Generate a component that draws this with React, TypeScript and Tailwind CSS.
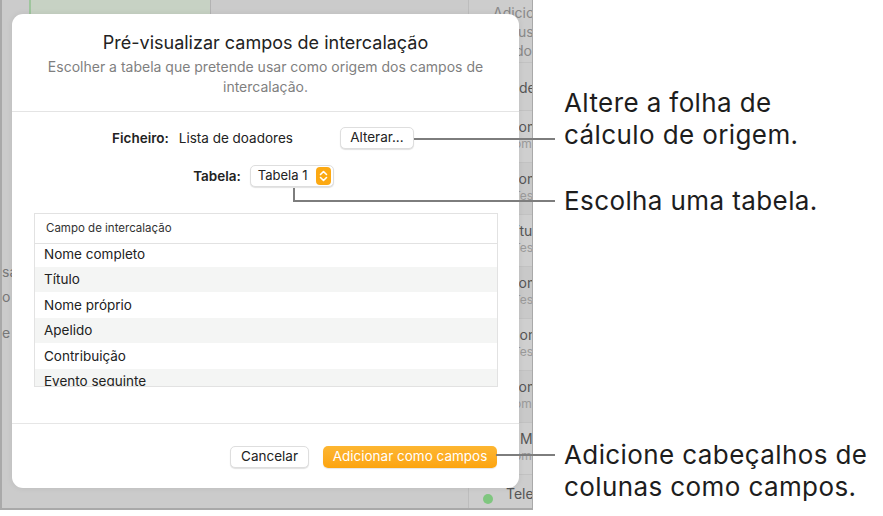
import React from "react";

const stripRows = [
  { a: "Nome", b: "Nome", pa: 508, pb: 505 },
  { a: "Nome", b: "Teste", pa: 508, pb: 513 },
  { a: "Título", b: "Teste", pa: 507, pb: 513 },
  { a: "Nome", b: "Teste", pa: 508, pb: 513 },
  { a: "Nome", b: "Teste", pa: 509, pb: 513 },
  { a: "Nome", b: "Nome", pa: 508, pb: 505 },
  { a: "Mail", b: "Nome", pa: 520, pb: 505 },
];

const fields = [
  "Nome completo",
  "Título",
  "Nome próprio",
  "Apelido",
  "Contribuição",
  "Evento seguinte",
];

function Stepper() {
  return (
    <svg width="15" height="18" viewBox="0 0 15 18" className="block shrink-0">
      <rect x="0" y="0" width="15" height="18" rx="4" fill="#fca913" />
      <path d="M4.5 7.5 L7.5 4.5 L10.5 7.5" fill="none" stroke="white" strokeWidth="1.6" strokeLinecap="round" strokeLinejoin="round" />
      <path d="M4.5 10.5 L7.5 13.5 L10.5 10.5" fill="none" stroke="white" strokeWidth="1.6" strokeLinecap="round" strokeLinejoin="round" />
    </svg>
  );
}

export default function App() {
  return (
    <div
      className="relative w-[883px] h-[516px] bg-white overflow-hidden flex items-start"
      style={{ fontFamily: "Inter, 'Noto Sans', sans-serif" }}
    >
      {/* background app screenshot */}
      <div className="relative w-[533px] h-[510px] shrink-0 bg-[#cbcbcb] border-l-2 border-r border-b-2 border-[#a9a9a9] overflow-hidden flex">
        <div className="relative flex-1 flex flex-col">
          <div className="h-[14px] flex">
            <div className="w-[27px]" />
            <div className="w-[182px] bg-[#c7d2c4] border-l-2 border-[#9ec59d] border-r border-r-[#b3b3b3]" />
          </div>
          <div className="mt-[248px] flex flex-col text-[14px] leading-[20px] text-[#777]">
            <div className="h-[25px]">sa</div>
            <div className="h-[36px]">o</div>
            <div>e l</div>
          </div>
        </div>
        <div className="w-[64px] shrink-0 border-l border-[#bdbdbd] bg-[#cdcdcd] flex flex-col text-[14px]">
          <div className="h-[63px] border-b border-[#c2c2c2] text-[#888] leading-[19px] pt-[3px] whitespace-nowrap">
            <div className="pl-[24px]">Adicionar</div>
            <div className="pl-[49px]">usando</div>
            <div className="pl-[46px]">dos</div>
          </div>
          <div className="h-[48px] border-b border-[#c2c2c2] text-[#555] pl-[50px] pt-[14px] whitespace-nowrap">de</div>
          {stripRows.map((r, i) => (
            <div
              key={i}
              className={`h-[52px] border-b border-[#c2c2c2] whitespace-nowrap relative ${i % 2 === 0 ? "bg-[#cfcfcf]" : "bg-[#c9c9c9]"}`}
            >
              <div className="absolute top-[5px] text-[14px] text-[#555]" style={{ left: r.pa - 469 }}>
                {r.a}
              </div>
              <div className="absolute top-[24px] text-[12px] text-[#9a9a9a]" style={{ left: r.pb - 469 }}>
                {r.b}
              </div>
            </div>
          ))}
          <div className="flex items-center gap-[13px] pl-[14px] pt-[9px] whitespace-nowrap">
            <div className="w-[10px] h-[10px] shrink-0 rounded-full bg-[#7fc67f] mt-[10px]" />
            <div className="text-[14px] text-[#555] -mt-[2px]">Telefone</div>
          </div>
        </div>

        {/* dialog sheet */}
        <div className="absolute left-[10px] top-[14px] w-[507px] h-[474px] bg-white rounded-[11px] flex flex-col shadow-[0_0_6px_rgba(0,0,0,0.08)]">
          <div className="pt-[18px] pb-[14px] flex flex-col items-center text-center border-b border-[#e4e4e4]">
            <div className="text-[18px] leading-[22px] text-[#222]">Pré-visualizar campos de intercalação</div>
            <div className="mt-[3px] w-[450px] text-[14px] leading-[20px] text-[#7f7f7f]">
              Escolher a tabela que pretende usar como origem dos campos de intercalação.
            </div>
          </div>

          <div className="flex flex-col items-center pt-[15px]">
            <div className="flex items-center h-[22px] text-[13.5px] text-[#222] whitespace-nowrap ml-[-5px]">
              <span className="font-semibold">Ficheiro:</span>
              <span className="ml-[10px]">Lista de doadores</span>
              <button className="ml-[47px] h-[22px] w-[74px] rounded-[5px] bg-white border border-[#dedede] shadow-[0_1px_1px_rgba(0,0,0,0.12)] text-[13.5px] text-[#222] leading-none">
                Alterar...
              </button>
            </div>
            <div className="flex items-center h-[22px] mt-[16px] text-[13.5px] text-[#222] whitespace-nowrap ml-[-4px]">
              <span className="font-semibold">Tabela:</span>
              <div className="ml-[9px] h-[22px] w-[84px] rounded-[5px] bg-white border border-[#dedede] shadow-[0_1px_1px_rgba(0,0,0,0.12)] flex items-center pl-[7px] pr-[2px] justify-between">
                <span className="whitespace-nowrap text-[13px]">Tabela 1</span>
                <Stepper />
              </div>
            </div>
          </div>

          <div className="ml-[22px] mr-[21px] mt-[26px] h-[174px] border border-[#e2e2e2] flex flex-col overflow-hidden">
            <div className="relative z-10 h-[30px] shrink-0 bg-white border-b border-[#e2e2e2] flex items-center pl-[11px] text-[11.5px] text-[#333]">
              Campo de intercalação
            </div>
            <div className="-mt-[3px] flex flex-col">
              {fields.map((f, i) => (
                <div
                  key={f}
                  className={`h-[25.5px] shrink-0 flex items-center pl-[9px] text-[13.5px] text-[#222] ${i % 2 === 1 ? "bg-[#f4f5f4]" : "bg-white"}`}
                >
                  {f}
                </div>
              ))}
            </div>
          </div>

          <div className="mt-[36px] border-t border-[#e6e6e6] flex justify-end items-center pt-[22px] pr-[22px] gap-[14px]">
            <button className="h-[22px] w-[79px] rounded-[5px] bg-white border border-[#dedede] shadow-[0_1px_1px_rgba(0,0,0,0.12)] text-[13.5px] text-[#222] leading-none">
              Cancelar
            </button>
            <button className="h-[22px] w-[174px] rounded-[5px] bg-gradient-to-b from-[#fdb631] to-[#fca40d] text-[13.5px] text-white leading-none shadow-[0_1px_1px_rgba(0,0,0,0.1)]">
              Adicionar como campos
            </button>
          </div>
        </div>
      </div>

      {/* callout labels */}
      <div className="flex flex-col pl-[31px] pt-[87px] text-[26px] leading-[32px] tracking-[0.4px] text-[#1d1d1d] whitespace-nowrap">
        <div>
          <div>Altere a folha de</div>
          <div>cálculo de origem.</div>
        </div>
        <div className="mt-[34px]">Escolha uma tabela.</div>
        <div className="mt-[222px]">
          <div>Adicione cabeçalhos de</div>
          <div>colunas como campos.</div>
        </div>
      </div>

      {/* callout lines */}
      <div className="absolute left-[414px] top-[138px] w-[141px] h-[2px] bg-[#7d7d7d]" />
      <div className="absolute left-[293px] top-[188px] w-[2px] h-[14px] bg-[#7d7d7d]" />
      <div className="absolute left-[293px] top-[200px] w-[262px] h-[2px] bg-[#7d7d7d]" />
      <div className="absolute left-[496px] top-[454px] w-[59px] h-[2px] bg-[#7d7d7d]" />
    </div>
  );
}
